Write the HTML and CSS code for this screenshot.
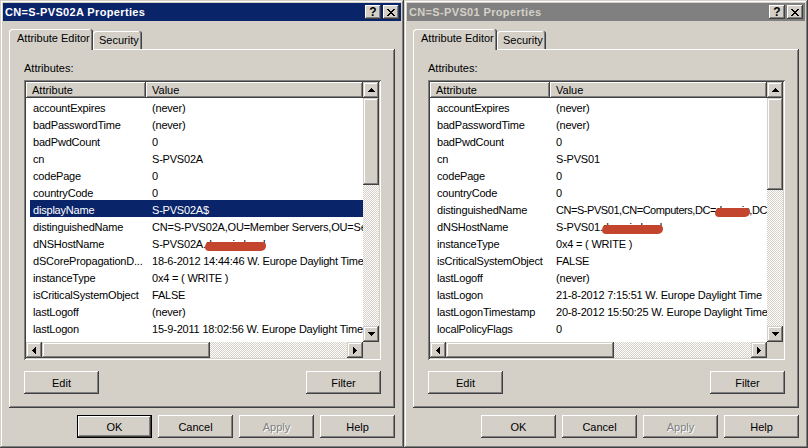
FILE: index.html
```html
<!DOCTYPE html>
<html>
<head>
<meta charset="utf-8">
<link rel="stylesheet" href="styles.css">
</head>
<body>
<div class="desktop">

  <div class="window">
    <div class="titlebar active">
      <span class="title">CN=S-PVS02A Properties</span>
      <span class="tbtn q">?</span>
      <span class="tbtn"><svg width="8" height="7" viewBox="0 0 8 7"><path d="M0 0h2v1H0zM6 0h2v1H6zM1 1h2v1H1zM5 1h2v1H5zM2 2h4v1H2zM3 3h2v1H3zM2 4h4v1H2zM1 5h2v1H1zM5 5h2v1H5zM0 6h2v1H0zM6 6h2v1H6z" fill="#000"/></svg></span>
    </div>
    <div class="tabstrip">
      <div class="tab sel">Attribute Editor</div>
      <div class="tab sec">Security</div>
    </div>
    <div class="panel">
      <div class="label">Attributes:</div>
      <div class="listbox">
        <div class="listview">
          <div class="hdr"><div class="h h1">Attribute</div><div class="h h2">Value</div></div>
          <div class="row"><span class="k">accountExpires</span><span class="v">(never)</span></div>
          <div class="row"><span class="k">badPasswordTime</span><span class="v">(never)</span></div>
          <div class="row"><span class="k">badPwdCount</span><span class="v">0</span></div>
          <div class="row"><span class="k">cn</span><span class="v">S-PVS02A</span></div>
          <div class="row"><span class="k">codePage</span><span class="v">0</span></div>
          <div class="row"><span class="k">countryCode</span><span class="v">0</span></div>
          <div class="row selected"><span class="k">displayName</span><span class="v">S-PVS02A$</span></div>
          <div class="row"><span class="k">distinguishedName</span><span class="v">CN=S-PVS02A,OU=Member Servers,OU=Servers,DC=domain,DC=local</span></div>
          <div class="row"><span class="k">dNSHostName</span><span class="v">S-PVS02A.<span class="redact">domain.local</span></span></div>
          <div class="row"><span class="k">dSCorePropagationD...</span><span class="v">18-6-2012 14:44:46 W. Europe Daylight Time</span></div>
          <div class="row"><span class="k">instanceType</span><span class="v">0x4 = ( WRITE )</span></div>
          <div class="row"><span class="k">isCriticalSystemObject</span><span class="v">FALSE</span></div>
          <div class="row"><span class="k">lastLogoff</span><span class="v">(never)</span></div>
          <div class="row"><span class="k">lastLogon</span><span class="v">15-9-2011 18:02:56 W. Europe Daylight Time</span></div>
          <div class="row"><span class="k">lastLogonTimestamp</span><span class="v">30-8-2012 16:07:04 W. Europe Daylight Time</span></div>
        </div>
        <div class="vscroll">
          <div class="sbtn"><svg width="7" height="4" viewBox="0 0 7 4"><path d="M3 0h1v1H3zM2 1h3v1H2zM1 2h5v1H1zM0 3h7v1H0z" fill="#000"/></svg></div>
          <div class="thumb vthumb"></div>
          <div class="track"></div>
          <div class="sbtn"><svg width="7" height="4" viewBox="0 0 7 4"><path d="M0 0h7v1H0zM1 1h5v1H1zM2 2h3v1H2zM3 3h1v1H3z" fill="#000"/></svg></div>
        </div>
        <div class="hscroll">
          <div class="sbtn"><svg width="4" height="7" viewBox="0 0 4 7"><path d="M3 0h1v7H3zM2 1h1v5H2zM1 2h1v3H1zM0 3h1v1H0z" fill="#000"/></svg></div>
          <div class="thumb hthumb"></div>
          <div class="track"></div>
          <div class="sbtn"><svg width="4" height="7" viewBox="0 0 4 7"><path d="M0 0h1v7H0zM1 1h1v5H1zM2 2h1v3H2zM3 3h1v1H3z" fill="#000"/></svg></div>
        </div>
        <div class="corner"></div>
      </div>
      <div class="btnrow">
        <div class="btn">Edit</div>
        <div class="btn">Filter</div>
      </div>
    </div>
    <div class="bottombar">
      <div class="btn default">OK</div>
      <div class="btn">Cancel</div>
      <div class="btn disabled">Apply</div>
      <div class="btn">Help</div>
    </div>
  </div>

  <div class="window">
    <div class="titlebar inactive">
      <span class="title">CN=S-PVS01 Properties</span>
      <span class="tbtn q">?</span>
      <span class="tbtn"><svg width="8" height="7" viewBox="0 0 8 7"><path d="M0 0h2v1H0zM6 0h2v1H6zM1 1h2v1H1zM5 1h2v1H5zM2 2h4v1H2zM3 3h2v1H3zM2 4h4v1H2zM1 5h2v1H1zM5 5h2v1H5zM0 6h2v1H0zM6 6h2v1H6z" fill="#000"/></svg></span>
    </div>
    <div class="tabstrip">
      <div class="tab sel">Attribute Editor</div>
      <div class="tab sec">Security</div>
    </div>
    <div class="panel">
      <div class="label">Attributes:</div>
      <div class="listbox">
        <div class="listview">
          <div class="hdr"><div class="h h1">Attribute</div><div class="h h2">Value</div></div>
          <div class="row"><span class="k">accountExpires</span><span class="v">(never)</span></div>
          <div class="row"><span class="k">badPasswordTime</span><span class="v">(never)</span></div>
          <div class="row"><span class="k">badPwdCount</span><span class="v">0</span></div>
          <div class="row"><span class="k">cn</span><span class="v">S-PVS01</span></div>
          <div class="row"><span class="k">codePage</span><span class="v">0</span></div>
          <div class="row"><span class="k">countryCode</span><span class="v">0</span></div>
          <div class="row"><span class="k">distinguishedName</span><span class="v tight">CN=S-PVS01,CN=Computers,DC=<span class="redact">domain</span>,DC=local</span></div>
          <div class="row"><span class="k">dNSHostName</span><span class="v">S-PVS01.<span class="redact">domain.local</span></span></div>
          <div class="row"><span class="k">instanceType</span><span class="v">0x4 = ( WRITE )</span></div>
          <div class="row"><span class="k">isCriticalSystemObject</span><span class="v">FALSE</span></div>
          <div class="row"><span class="k">lastLogoff</span><span class="v">(never)</span></div>
          <div class="row"><span class="k">lastLogon</span><span class="v">21-8-2012 7:15:51 W. Europe Daylight Time</span></div>
          <div class="row"><span class="k">lastLogonTimestamp</span><span class="v">20-8-2012 15:50:25 W. Europe Daylight Time</span></div>
          <div class="row"><span class="k">localPolicyFlags</span><span class="v">0</span></div>
          <div class="row"><span class="k">logonCount</span><span class="v">41</span></div>
        </div>
        <div class="vscroll">
          <div class="sbtn"><svg width="7" height="4" viewBox="0 0 7 4"><path d="M3 0h1v1H3zM2 1h3v1H2zM1 2h5v1H1zM0 3h7v1H0z" fill="#000"/></svg></div>
          <div class="thumb vthumb2"></div>
          <div class="track"></div>
          <div class="sbtn"><svg width="7" height="4" viewBox="0 0 7 4"><path d="M0 0h7v1H0zM1 1h5v1H1zM2 2h3v1H2zM3 3h1v1H3z" fill="#000"/></svg></div>
        </div>
        <div class="hscroll">
          <div class="sbtn"><svg width="4" height="7" viewBox="0 0 4 7"><path d="M3 0h1v7H3zM2 1h1v5H2zM1 2h1v3H1zM0 3h1v1H0z" fill="#000"/></svg></div>
          <div class="thumb hthumb"></div>
          <div class="track"></div>
          <div class="sbtn"><svg width="4" height="7" viewBox="0 0 4 7"><path d="M0 0h1v7H0zM1 1h1v5H1zM2 2h1v3H2zM3 3h1v1H3z" fill="#000"/></svg></div>
        </div>
        <div class="corner"></div>
      </div>
      <div class="btnrow">
        <div class="btn">Edit</div>
        <div class="btn">Filter</div>
      </div>
    </div>
    <div class="bottombar">
      <div class="btn">OK</div>
      <div class="btn">Cancel</div>
      <div class="btn disabled">Apply</div>
      <div class="btn">Help</div>
    </div>
  </div>

</div>
</body>
</html>
```
FILE: styles.css
```css
* { box-sizing: border-box; }
html, body { margin: 0; padding: 0; }
body {
  background: #D4D0C8;
  font-family: "Liberation Sans", Arial, sans-serif;
  font-size: 11px;
  color: #000;
}
.desktop {
  display: flex;
  width: 808px;
  height: 448px;
}
.window {
  width: 404px;
  height: 448px;
  padding: 3px;
  background: #D4D0C8;
  display: flex;
  flex-direction: column;
  box-shadow: inset -1px -1px #404040, inset 1px 1px #D4D0C8, inset -2px -2px #808080, inset 2px 2px #FFFFFF;
}
.titlebar {
  height: 18px;
  display: flex;
  align-items: center;
  padding: 0 2px;
  flex-shrink: 0;
}
.titlebar.active { background: #0A246A; color: #FFFFFF; }
.titlebar.inactive { background: #808080; color: #D4D0C8; }
.title {
  flex: 1;
  font-weight: bold;
  font-size: 11px;
  letter-spacing: 0.35px;
  white-space: nowrap;
}
.tbtn {
  width: 16px;
  height: 14px;
  margin-left: 2px;
  background: #D4D0C8;
  color: #000;
  display: flex;
  align-items: center;
  justify-content: center;
  box-shadow: inset -1px -1px #404040, inset 1px 1px #FFFFFF, inset -2px -2px #808080;
}
.tbtn.q { font-weight: bold; font-size: 12px; line-height: 14px; padding-bottom: 1px; }
.tabstrip {
  display: flex;
  align-items: flex-end;
  height: 20px;
  margin: 8px 6px 0;
  flex-shrink: 0;
}
.tab {
  background: #D4D0C8;
  border-radius: 3px 3px 0 0;
  box-shadow: inset -1px 0 #404040, inset 1px 1px #FFFFFF, inset -2px 0 #808080;
  white-space: nowrap;
}
.tab.sel {
  width: 84px;
  height: 21px;
  margin-bottom: -1px;
  position: relative;
  z-index: 1;
  padding: 3px 0 0 8px;
  line-height: 13px;
}
.tab.sec {
  width: 49px;
  height: 18px;
  padding: 3px 0 0 6px;
  line-height: 13px;
}
.panel {
  margin: 0 6px;
  height: 359px;
  flex-shrink: 0;
  padding: 12px 14px 0 15px;
  box-shadow: inset -1px -1px #404040, inset 1px 1px #FFFFFF, inset -2px -2px #808080;
  display: flex;
  flex-direction: column;
}
.label {
  height: 13px;
  line-height: 13px;
  padding-top: 1px;
}
.listbox {
  margin-top: 6px;
  height: 280px;
  padding: 2px;
  background: #FFFFFF;
  box-shadow: inset 1px 1px #808080, inset -1px -1px #FFFFFF, inset 2px 2px #404040, inset -2px -2px #D4D0C8;
  display: grid;
  grid-template-columns: 1fr 16px;
  grid-template-rows: 1fr 16px;
}
.listview {
  overflow: hidden;
  background: #FFFFFF;
  min-width: 0;
}
.hdr {
  display: flex;
  height: 16px;
}
.h {
  background: #D4D0C8;
  box-shadow: inset -1px -1px #404040, inset 1px 1px #FFFFFF, inset -2px -2px #808080;
  padding-left: 6px;
  line-height: 16px;
}
.h1 { width: 120px; }
.h2 { flex: 1; }
.row {
  display: flex;
  height: 17px;
  line-height: 17px;
  padding-top: 2px;
  margin-left: 4px;
  white-space: nowrap;
  overflow: hidden;
  letter-spacing: -0.2px;
}
.row .k {
  width: 116px;
  flex-shrink: 0;
  padding-left: 3px;
  overflow: hidden;
}
.row .v {
  padding-left: 6px;
}
.row .v.tight { letter-spacing: -0.45px; }
.row.selected {
  background: #0A246A;
  color: #FFFFFF;
}
.redact {
  position: relative;
}
.redact::after {
  content: "";
  position: absolute;
  left: -1px;
  right: -1px;
  top: 4px;
  height: 9px;
  border-radius: 5px 4px 5px 4px;
  background: #C4452D;
}
.vscroll {
  display: flex;
  flex-direction: column;
}
.hscroll {
  display: flex;
}
.sbtn {
  width: 16px;
  height: 16px;
  flex-shrink: 0;
  background: #D4D0C8;
  display: flex;
  align-items: center;
  justify-content: center;
  box-shadow: inset -1px -1px #404040, inset 1px 1px #D4D0C8, inset -2px -2px #808080, inset 2px 2px #FFFFFF;
}
.thumb {
  flex-shrink: 0;
  background: #D4D0C8;
  box-shadow: inset -1px -1px #404040, inset 1px 1px #D4D0C8, inset -2px -2px #808080, inset 2px 2px #FFFFFF;
}
.vthumb { height: 87px; }
.vthumb2 { height: 92px; }
.hthumb { width: 168px; }
.track {
  flex: 1;
  background-color: #FFFFFF;
  background-image: repeating-conic-gradient(#D4D0C8 0 25%, #FFFFFF 0 50%);
  background-size: 2px 2px;
}
.corner { background: #D4D0C8; }
.btnrow {
  margin-top: 11px;
  display: flex;
  justify-content: space-between;
}
.btn {
  width: 75px;
  height: 23px;
  background: #D4D0C8;
  display: flex;
  align-items: center;
  justify-content: center;
  box-shadow: inset -1px -1px #404040, inset 1px 1px #FFFFFF, inset -2px -2px #808080;
}
.btn.default {
  box-shadow: inset 0 0 0 1px #000000, inset -2px -2px #404040, inset 2px 2px #FFFFFF, inset -3px -3px #808080;
}
.btn.disabled {
  color: #808080;
  text-shadow: 1px 1px #FFFFFF;
}
.bottombar {
  margin-top: 7px;
  padding-right: 6px;
  display: flex;
  justify-content: flex-end;
  gap: 6px;
}
```
